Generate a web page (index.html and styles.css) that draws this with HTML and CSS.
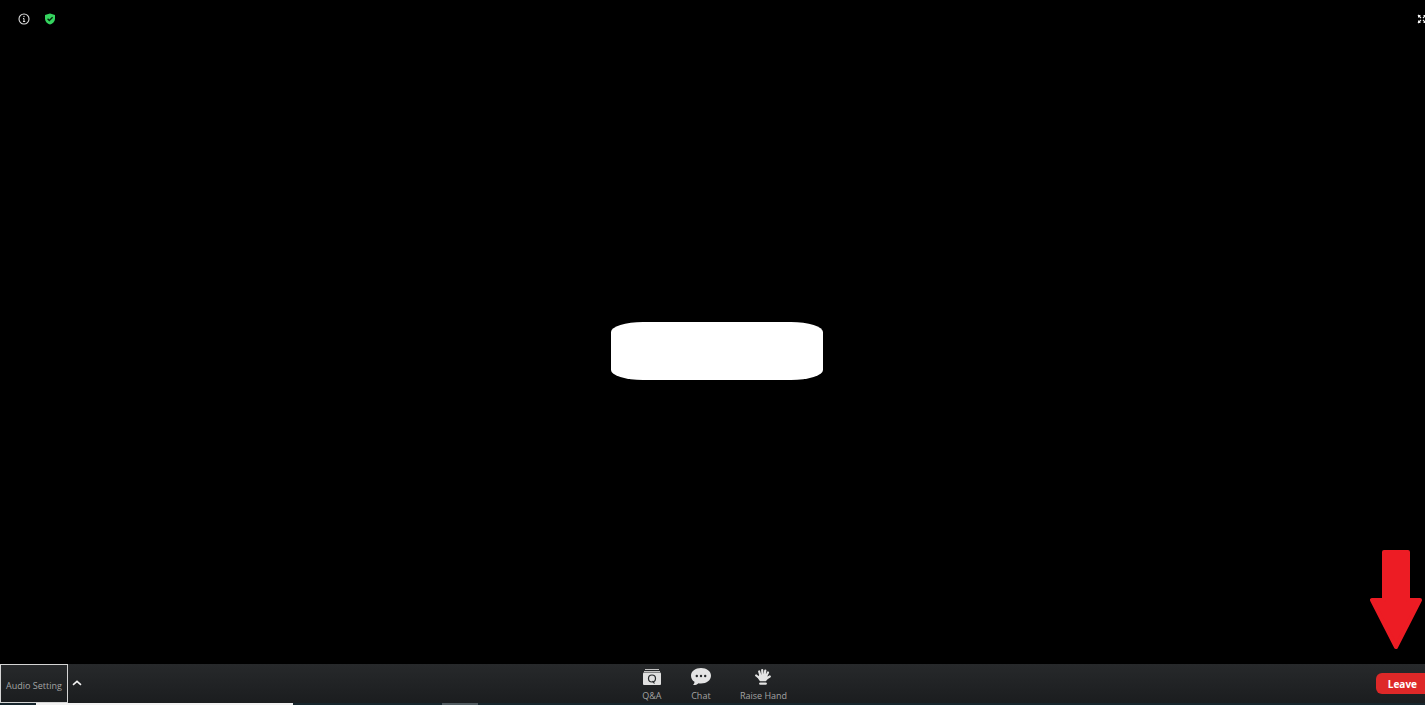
FILE: index.html
```
<!DOCTYPE html>
<html lang="en">

<head>
    <meta charset="UTF-8">
    <meta name="viewport" content="width=device-width, initial-scale=1.0">
    <title>Webinar</title>
    <link rel="stylesheet" href="styles.css">
</head>

<body>

    <div class="meeting">
        <header class="top-bar">
            <div class="top-left">
                <button class="icon-button" aria-label="Meeting information">
                    <svg width="12" height="12" viewBox="0 0 12 12">
                        <circle cx="6" cy="6" r="5" fill="none" stroke="#dcdcdc" stroke-width="1.1" />
                        <path d="M5 5.500h1v3.200M5 8.500h2.200" fill="none" stroke="#dcdcdc" stroke-width="1" />
                        <circle cx="6" cy="3.500" r=".7" fill="#dcdcdc" />
                    </svg>
                </button>
                <button class="icon-button" aria-label="Encryption">
                    <svg width="12" height="12" viewBox="0 0 12 12">
                        <path d="M6 .5 11 2v4C11 8.600 8.600 10.600 6 11.600 3.400 10.600 1 8.600 1 6V2z" fill="#35d45f" />
                        <path d="M3.600 5.800 5.300 7.500 8.600 4.200" fill="none" stroke="#06250e" stroke-width="1.300" />
                    </svg>
                </button>
            </div>
            <button class="icon-button fullscreen" aria-label="Enter full screen">
                <svg width="10" height="10" viewBox="0 0 10 10">
                    <path d="M1 1h3L1 4zM9 1v3L6 1zM9 9H6l3-3zM1 9V6l3 3z" fill="#f4f4f4" />
                    <path d="M1 1l3 3M9 1 6 4M9 9 6 6M1 9l3-3" stroke="#f4f4f4" stroke-width="1.200" />
                </svg>
            </button>
        </header>

        <main class="stage">
            <div class="name-cover"></div>
            <svg class="leave-arrow" width="52" height="100" viewBox="0 0 52 100" aria-hidden="true">
                <path d="M14 2h24v48h12L26 97 2 50h12z" fill="#ed1c24" stroke="#ed1c24" stroke-width="4" stroke-linejoin="round" />
            </svg>
        </main>

        <footer class="toolbar">
            <div class="audio">
                <button class="audio-setting">Audio Setting</button>
                <button class="audio-more" aria-label="More audio options">
                    <svg width="10" height="6" viewBox="0 0 10 6">
                        <path d="M1 4.800 5 1.300 9 4.800" fill="none" stroke="#f2f2f2" stroke-width="1.600" />
                    </svg>
                </button>
            </div>

            <div class="tools">
                <button class="tool">
                    <svg width="20" height="18" viewBox="0 0 20 18">
                        <path d="M3 1.500h14M2 3.500h16" stroke="#c4c4c4" stroke-width="1" />
                        <rect x="1" y="4.500" width="18" height="12.500" rx="1" fill="#e0e0e0" />
                        <circle cx="10" cy="10.500" r="3.500" fill="none" stroke="#25282a" stroke-width="1.200" />
                        <path d="M10.500 13 12.500 15.500" stroke="#25282a" stroke-width="1.200" />
                    </svg>
                    <span>Q&amp;A</span>
                </button>
                <button class="tool">
                    <svg width="20" height="18" viewBox="0 0 20 18">
                        <path d="M10 0c5.600 0 10 3.200 10 7.700s-4.400 7.700-10 7.700c-.9 0-1.700-.1-2.500-.2C6 16.700 4 17.200 2 17c1-1 1.500-2 1.500-3.200C1.300 12.400 0 10.300 0 7.700 0 3.200 4.400 0 10 0z" fill="#e4e4e4" />
                        <circle cx="5.800" cy="8" r="1.200" fill="#25282a" />
                        <circle cx="10" cy="8" r="1.200" fill="#25282a" />
                        <circle cx="14.200" cy="8" r="1.200" fill="#25282a" />
                    </svg>
                    <span>Chat</span>
                </button>
                <button class="tool">
                    <svg width="18" height="18" viewBox="0 0 18 18">
                        <g fill="none" stroke="#e4e4e4" stroke-width="2.200" stroke-linecap="round">
                            <path d="M6.500 8 5.200 3.500M8.500 7.500 8.200 2M10.500 7.500l.8-5M12 8.500l2-4M6 10.500 2.200 7.500M12.500 10.500 15.800 8.500" />
                        </g>
                        <path d="M5.200 7h7.600l1 2.800c-.3 1.600-1 2.600-2 3.400H6.200C5 12.200 4.300 11 3.800 9.200z" fill="#e4e4e4" />
                        <path d="M6.300 15.600h5.400" stroke="#e4e4e4" stroke-width="2.400" stroke-linecap="round" />
                    </svg>
                    <span>Raise Hand</span>
                </button>
            </div>

            <button class="leave">Leave</button>
        </footer>

        <div class="desktop-edge">
            <span class="edge-light"></span>
            <span class="edge-tab"></span>
        </div>
    </div>

</body>

</html>
```
FILE: styles.css
```
body {
    margin: 0;
    background: #000;
    font-family: "Open Sans", sans-serif;
}

button {
    margin: 0;
    padding: 0;
    border: 0;
    background: none;
    font-family: inherit;
    cursor: pointer;
}

svg {
    display: block;
}

.meeting {
    display: flex;
    flex-direction: column;
    height: 100vh;
    overflow: hidden;
}

.top-bar {
    display: flex;
    justify-content: space-between;
    align-items: center;
    height: 37px;
    padding-left: 18px;
}

.top-left {
    display: flex;
    gap: 14px;
}

.icon-button {
    flex: none;
}

/* the window runs a little past the right edge of the screen */
.fullscreen {
    margin-right: -2px;
}

.stage {
    position: relative;
    display: flex;
    flex: 1;
    align-items: center;
    justify-content: center;
    padding-left: 8px;
}

.name-cover {
    width: 212px;
    height: 58px;
    border-radius: 32px / 10px;
    background: #fff;
}

.leave-arrow {
    position: absolute;
    right: 3px;
    bottom: 14px;
}

.toolbar {
    display: grid;
    grid-template-columns: 1fr auto 1fr;
    height: 39px;
    background: linear-gradient(#27292b, #1b1d1f);
}

.audio {
    display: flex;
}

.audio-setting {
    width: 68px;
    padding-top: 4px;
    border: 1px solid #d5d5d5;
    font-size: 9px;
    color: #a3a3a3;
    white-space: nowrap;
}

.audio-more {
    padding: 0 4px 2px;
}

.tools {
    display: flex;
    gap: 29px;
    padding: 3px 0 0 4px;
}

.tool {
    display: flex;
    flex-direction: column;
    align-items: center;
    justify-content: center;
    gap: 4px;
    font-size: 9px;
    line-height: 12px;
    color: #a3a3a3;
}

.leave {
    justify-self: end;
    align-self: center;
    height: 21px;
    padding: 0 8px 0 12px;
    border-radius: 6px 0 0 6px;
    background: #de2828;
    font-size: 10px;
    font-weight: 700;
    color: #fff;
}

.desktop-edge {
    display: flex;
    height: 2px;
    background: #17262d;
}

.edge-light {
    width: 18%;
    margin-left: 36px;
    background: #f2f2f2;
}

.edge-tab {
    width: 36px;
    margin-left: 149px;
    background: #505b60;
}
```
